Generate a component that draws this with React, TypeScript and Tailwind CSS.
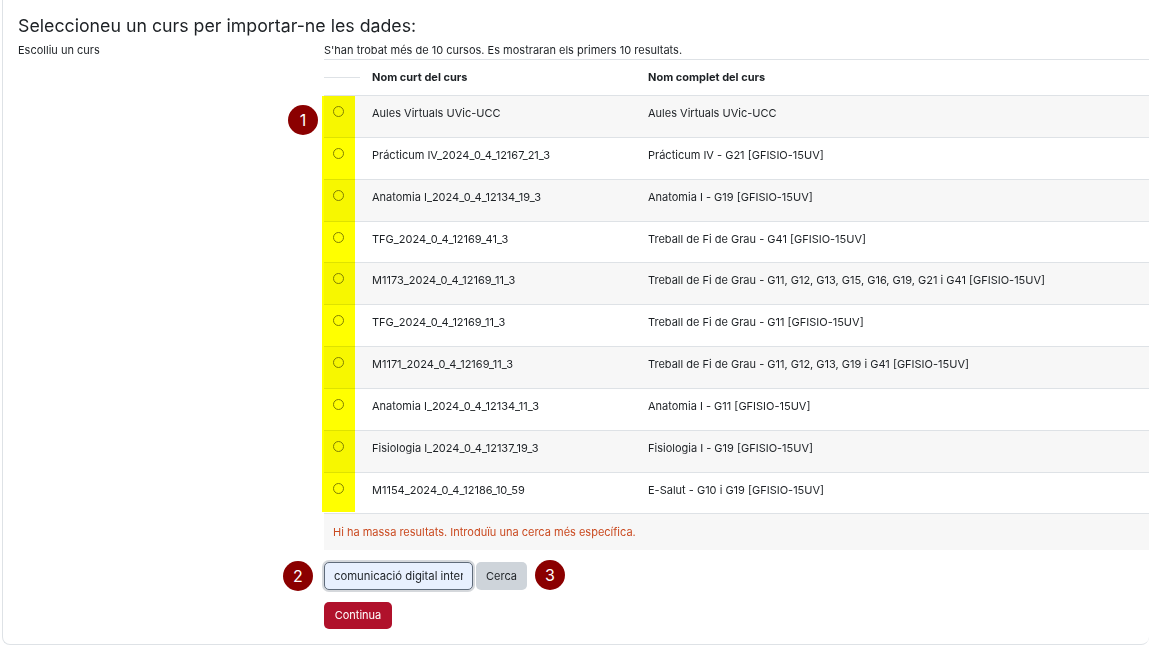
const rows = [
  ['Aules Virtuals UVic-UCC', 'Aules Virtuals UVic-UCC'],
  ['Prácticum IV_2024_0_4_12167_21_3', 'Prácticum IV - G21 [GFISIO-15UV]'],
  ['Anatomia I_2024_0_4_12134_19_3', 'Anatomia I - G19 [GFISIO-15UV]'],
  ['TFG_2024_0_4_12169_41_3', 'Treball de Fi de Grau - G41 [GFISIO-15UV]'],
  ['M1173_2024_0_4_12169_11_3', 'Treball de Fi de Grau - G11, G12, G13, G15, G16, G19, G21 i G41 [GFISIO-15UV]'],
  ['TFG_2024_0_4_12169_11_3', 'Treball de Fi de Grau - G11 [GFISIO-15UV]'],
  ['M1171_2024_0_4_12169_11_3', 'Treball de Fi de Grau - G11, G12, G13, G19 i G41 [GFISIO-15UV]'],
  ['Anatomia I_2024_0_4_12134_11_3', 'Anatomia I - G11 [GFISIO-15UV]'],
  ['Fisiologia I_2024_0_4_12137_19_3', 'Fisiologia I - G19 [GFISIO-15UV]'],
  ['M1154_2024_0_4_12186_10_59', 'E-Salut - G10 i G19 [GFISIO-15UV]'],
]

function Badge({ n, className }: { n: number; className: string }) {
  return (
    <div className={`absolute flex h-[30px] w-[30px] items-center justify-center rounded-full bg-[#8b0000] text-[16px] text-white ${className}`}>
      {n}
    </div>
  )
}

export default function App() {
  return (
    <div className="h-[656px] w-[1149px] overflow-hidden bg-white font-['Inter',sans-serif] text-[#1d2125]">
      <div className="relative ml-[2px] h-[645px] rounded-b-[8px] border-b border-l border-[#dee2e6] pl-[15px]">
        <h3 className="pt-[14px] text-[17.75px] leading-[24px] font-normal">Seleccioneu un curs per importar-ne les dades:</h3>
        <div className="mt-[4px] flex">
          <div className="w-[306px] shrink-0 text-[11px] leading-[16px]">Escolliu un curs</div>
          <div className="flex-1">
            <p className="h-[17px] text-[11px] leading-[16px]">S'han trobat més de 10 cursos. Es mostraran els primers 10 resultats.</p>
            <div className="flex h-[37px] items-center border-t border-b border-[#dee2e6] text-[11px] font-bold">
              <div className="h-px w-[36px] bg-[#dee2e6]" />
              <div className="ml-[12px] w-[276px]">Nom curt del curs</div>
              <div>Nom complet del curs</div>
            </div>
            {rows.map((r, i) => (
              <div key={r[0]} className={`flex h-[41.85px] border-b border-[#dee2e6] pt-[9px] text-[11px] leading-[16px] ${i % 2 === 0 ? 'bg-[#f7f7f7]' : 'bg-white'}`}>
                <div className="flex w-[28px] justify-center pt-[1px]">
                  <span className="h-[11px] w-[11px] rounded-full border border-[#808080]" />
                </div>
                <div className="ml-[20px] w-[276px]">{r[0]}</div>
                <div>{r[1]}</div>
              </div>
            ))}
            <div className="flex h-[36px] items-center bg-[#f7f7f7] pl-[9px] text-[11px] text-[#ca4a20]">
              Hi ha massa resultats. Introduïu una cerca més específica.
            </div>
            <div className="mt-[12px] flex items-center gap-[3px]">
              <div className="box-content h-[26px] w-[147px] overflow-hidden rounded-[5px] border border-[#5f6b7a] bg-[#e8f0fe] leading-[26px] whitespace-nowrap shadow-[0_0_0_2px_#d5d8dc]">
                <span className="ml-[9px] block w-[129px] overflow-hidden text-[11.3px]">comunicació digital interna</span>
              </div>
              <button className="h-[28px] w-[51px] rounded-[5px] bg-[#ced4da] pb-[1px] text-[11px]">Cerca</button>
            </div>
            <button className="mt-[12px] block h-[27px] w-[68px] rounded-[5px] bg-[#b0112b] pb-[1px] text-[11px] text-white">Continua</button>
          </div>
        </div>
        <div className="absolute top-[96px] left-[319px] h-[416px] w-[33px] bg-[#ffff00] mix-blend-multiply" />
        <Badge n={1} className="top-[105px] left-[285px]" />
        <Badge n={2} className="top-[561px] left-[280px]" />
        <Badge n={3} className="top-[560px] left-[532px]" />
      </div>
    </div>
  )
}
